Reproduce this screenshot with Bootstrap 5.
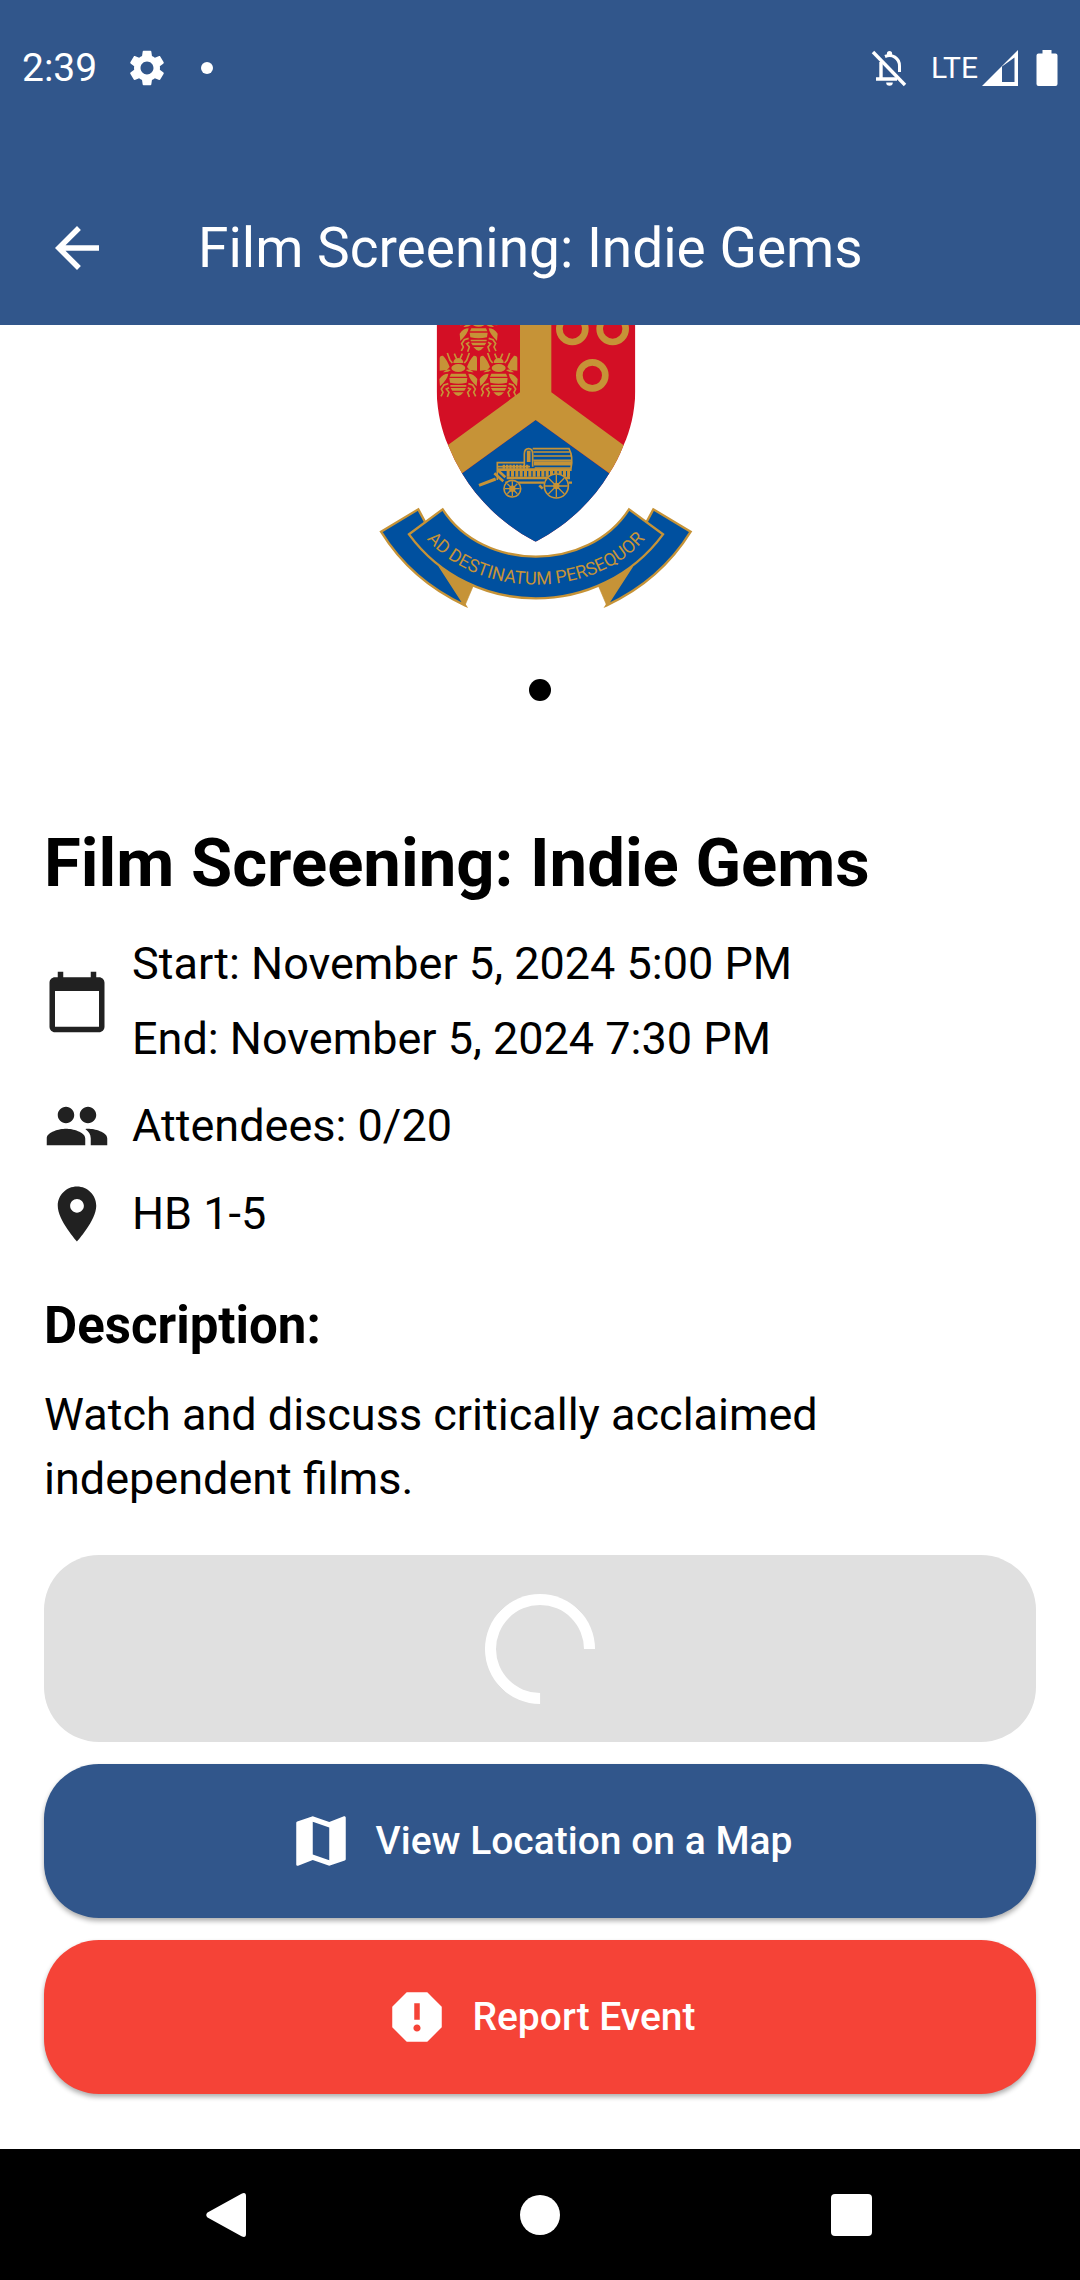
<!DOCTYPE html>
<html lang="en">
<head>
<meta charset="utf-8">
<meta name="viewport" content="width=device-width, initial-scale=1">
<title>Film Screening: Indie Gems</title>
<link href="https://cdn.jsdelivr.net/npm/bootstrap@5.3.0/dist/css/bootstrap.min.css" rel="stylesheet">
<style>
  :root { --navy: #31568b; --alert-red: #f54337; }
  body { font-family: Roboto, "Noto Sans", sans-serif; font-size: 45px; line-height: 64px; color: #000; background: #fff; }
  .bg-navy { background: var(--navy); }
  .status-bar { height: 171px; padding: 0 22px 36px; font-size: 39px; line-height: 44px; }
  .status-left { gap: 32px; }
  .lte-label { font-size: 30px; }
  .status-dot { width: 12px; height: 12px; margin-left: 4px; }
  .app-bar { height: 154px; padding: 0 44px; gap: 88px; }
  .app-title { font-size: 55px; line-height: 66px; font-weight: 400; }
  .icon-lg { width: 66px; height: 66px; flex: none; fill: currentColor; display: block; }
  .crest { width: 350px; height: 295px; display: block; }
  .page-dot { width: 22px; height: 22px; margin: 59px 0 115px; }
  .details { padding: 0 44px 55px; }
  .event-title { font-size: 67px; line-height: 94px; font-weight: 700; }
  .section-title { font-size: 51px; line-height: 70px; font-weight: 700; }
  .stack { gap: 22px; }
  .facts { margin: 22px 0 44px; gap: 22px; }
  .fact { gap: 22px; }
  .fact svg { color: #212121; }
  .dates { gap: 11px; }
  .about { margin: 22px 0 44px; }
  .action { border: 0; border-radius: 55px; height: 154px; gap: 22px; font-size: 39px; line-height: 55px; font-weight: 500; color: #fff; box-shadow: 0 3px 5px rgba(0,0,0,.32); }
  .action:hover { color: #fff; }
  .action-join, .action-join:disabled { height: 187px; background: #e0e0e0; box-shadow: none; opacity: 1; color: #fff; border: 0; }
  .action-map { background: var(--navy); }
  .action-report { background: var(--alert-red); }
  .action-join .spinner-border { width: 110px; height: 110px; border-width: 11px; animation: none; transform: rotate(45deg); }
  .system-nav { height: 132px; padding: 0 72px; }
  .system-nav button { background: none; border: 0; padding: 0; }
  .system-nav svg { width: 46px; height: 46px; fill: #fff; display: block; margin: 0 auto; }
</style>
</head>
<body class="d-flex flex-column min-vh-100">
<header class="bg-navy text-white">
  <div class="status-bar d-flex align-items-center justify-content-between">
    <div class="status-left d-flex align-items-center">
      <span>2:39</span>
      <svg width="36" height="36" viewBox="2 2 20 20" fill="#fff" aria-hidden="true"><path d="M19.14 12.94c.04-.3.06-.61.06-.94 0-.32-.02-.64-.07-.94l2.03-1.58c.18-.14.23-.41.12-.61l-1.92-3.32c-.12-.22-.37-.29-.59-.22l-2.39.96c-.5-.38-1.03-.7-1.62-.94l-.36-2.54c-.04-.24-.24-.41-.48-.41h-3.84c-.24 0-.43.17-.47.41l-.36 2.54c-.59.24-1.13.57-1.62.94l-2.39-.96c-.22-.08-.47 0-.59.22L2.74 8.87c-.12.21-.08.47.12.61l2.03 1.58c-.05.3-.09.63-.09.94s.02.64.07.94l-2.03 1.58c-.18.14-.23.41-.12.61l1.92 3.32c.12.22.37.29.59.22l2.39-.96c.5.38 1.03.7 1.62.94l.36 2.54c.05.24.24.41.48.41h3.84c.24 0 .44-.17.47-.41l.36-2.54c.59-.24 1.13-.56 1.62-.94l2.39.96c.22.08.47 0 .59-.22l1.92-3.32c.12-.22.07-.47-.12-.61l-2.01-1.58zM12 15.6c-1.98 0-3.6-1.62-3.6-3.6s1.62-3.6 3.6-3.6 3.6 1.62 3.6 3.6-1.62 3.6-3.6 3.6z"/></svg>
      <span class="status-dot rounded-circle bg-white"></span>
    </div>
    <div class="d-flex align-items-center">
      <svg class="me-4" width="36" height="38" viewBox="0 0 36 38" fill="none" stroke="#fff" aria-hidden="true"><path d="M2 3 L34 36" stroke-width="3.4"/><path d="M10 13 V29 M5 30 H26" stroke-width="3.4"/><path d="M14 7.500C21 4.500 28.500 9 28.500 17V23" stroke-width="3"/><circle cx="18.500" cy="4.500" r="2.600" fill="#fff" stroke="none"/><path d="M15.200 33.500h6.600a3.300 3.300 0 0 1-6.600 0z" fill="#fff" stroke="none"/></svg>
      <span class="lte-label me-1">LTE</span>
      <svg width="36" height="36" viewBox="0 0 36 36" fill="#fff" aria-hidden="true"><path fill-rule="evenodd" d="M0 36 36 0V36Z M20 16.500V32H32.500V7.500Z"/></svg>
      <svg class="ms-3" width="24" height="38" viewBox="0 0 24 38" fill="#fff" aria-hidden="true"><path d="M8.500 1h9v3.500h4q2 0 2 2V35q0 2-2 2h-17q-2 0-2-2V6.500q0-2 2-2h4z"/></svg>
    </div>
  </div>
  <div class="app-bar d-flex align-items-center">
    <a href="#" class="text-white" aria-label="Back"><svg class="icon-lg" viewBox="0 0 24 24"><path d="M20 11H7.830l5.590-5.590L12 4l-8 8 8 8 1.410-1.410L7.830 13H20v-2z"/></svg></a>
    <h1 class="app-title m-0">Film Screening: Indie Gems</h1>
  </div>
</header>

<main class="flex-grow-1">
  <div class="d-flex flex-column align-items-center">
    <svg class="crest" viewBox="15 15 1050 885" role="img" aria-label="Crest with the motto Ad Destinatum Persequor">
      <defs>
        <clipPath id="shield"><path d="M230 0V215C232 280 245 330 264 375Q283 422 306 460C360 550 440 620 527 665C614 620 694 550 748 460Q773 422 791 375C811 330 824 280 826 215V0Z"/></clipPath>
        <g id="bee" fill="#c69337" stroke="none">
          <path d="M-56-50Q-57-61-46-60Q-34-48-26-26L-34-17L-56-15Z"/><path d="M56-50Q57-61 46-60Q34-48 26-26L34-17L56-15Z"/>
          <path d="M-46-10Q-34-22-22-17Q-30-9-46-10ZM46-10Q34-22 22-17Q30-9 46-10Z"/>
          <path d="M-57 10Q-46-6-30-6Q-32 10-55 32ZM57 10Q46-6 30-6Q32 10 55 32Z"/>
          <path d="M-15-38Q-15-52 0-53Q15-52 15-38Z"/>
          <ellipse cx="0" cy="-23" rx="21" ry="12"/>
          <path d="M-22-6H22L26 3H-26ZM-27 7H27L25 21Q0 27-25 21ZM-24 28H24V33H-24ZM-23 37H23L18 45H-18ZM-16 50H16Q8 60 0 61Q-8 60-16 50Z"/>
          <path d="M-5-50-12-66M5-50 12-66M-18-38-25-46-33-68M18-38 25-46 33-68M-30 24-43 28-51 40-46 50-52 62M30 24 43 28 51 40 46 50 52 62M-28 36-36 40-28 50-33 64M28 36 36 40 28 50 33 64" fill="none" stroke="#c69337" stroke-width="5"/>
        </g>
        <path id="motto-line" d="M180 631C332 848 723 848 875 631"/>
      </defs>
      <g clip-path="url(#shield)">
        <rect x="220" y="0" width="620" height="680" fill="#d30f25"/>
        <path d="M200 537 527 300 854 537V680H200Z" fill="#00509f"/>
        <path d="M480 0V217L220 407V522L306 460 527 300 748 460 834 522V407L574 217V0Z" fill="#c69337"/>
      </g>
      <use href="#bee" x="295" y="167"/><use href="#bee" x="416" y="167"/><use href="#bee" x="356" y="31"/>
      <g fill="none" stroke="#c69337" stroke-width="20"><circle cx="637" cy="27" r="39"/><circle cx="758" cy="27" r="39"/><circle cx="697" cy="166" r="39"/></g>
      <g stroke="#c69337" fill="none" stroke-width="5">
        <path d="M357 496 407 477" stroke-width="9"/>
        <path d="M403 460 430 484M413 450 436 472" stroke-width="8"/>
        <path d="M412 480V428H495M414 440H510" />
        <path d="M428 440H508" stroke-width="12" stroke-dasharray="7 3"/>
        <path d="M493 440V402Q493 386 506 386Q518 386 518 402V440"/><path d="M506 392V426" stroke-width="11"/>
        <path d="M518 386H627Q640 410 633 444H524M520 396H633M520 408H635M520 421H635M522 434H635"/>
        <path d="M522 428H633" stroke-width="8"/>
        <path d="M412 449H635" stroke-width="8"/>
        <path d="M440 461H630" stroke-width="18" stroke-dasharray="9 4"/>
        <path d="M440 474H630M436 488H552M625 450V476M626 488H636" stroke-width="7"/>
        <path d="M538 496 548 506" stroke-width="8"/>
        <circle cx="457" cy="506" r="25" fill="#00509f"/><circle cx="457" cy="506" r="7"/>
        <circle cx="589" cy="498" r="36" fill="#00509f"/><circle cx="589" cy="498" r="7" fill="#c69337"/>
        <path d="M457 484V528M435 506H479M442 491 472 521M442 521 472 491M589 464V532M555 498H623M565 474 613 522M565 522 613 474" stroke-width="4"/>
      </g>
      <g stroke="#c69337" stroke-width="7">
        <path d="M63 635 175 568 200 615 240 740 315 856C205 805 125 735 63 635ZM992 635 880 568 855 615 815 740 740 856C850 805 930 735 992 635Z" fill="#00509f"/>
        <path d="M240 740 340 797 315 856ZM815 740 715 797 740 856Z" fill="#c69337" stroke-width="2"/>
        <path d="M248 568C370 757 685 757 807 568L909 643C720 899 335 899 147 643Z" fill="#00509f"/>
      </g>
      <text font-family="Roboto, sans-serif" font-size="54" fill="#c69337"><textPath href="#motto-line" startOffset="50%" text-anchor="middle">AD DESTINATUM PERSEQUOR</textPath></text>
    </svg>
    <span class="page-dot rounded-circle bg-black"></span>
  </div>

  <div class="details">
    <h2 class="event-title m-0">Film Screening: Indie Gems</h2>
    <div class="facts d-flex flex-column">
      <div class="fact d-flex align-items-center">
        <svg class="icon-lg" viewBox="0 0 24 24" aria-hidden="true"><path d="M20 3h-1V1h-2v2H7V1H5v2H4c-1.100 0-2 .9-2 2v16c0 1.100.9 2 2 2h16c1.100 0 2-.9 2-2V5c0-1.100-.9-2-2-2zm0 18H4V8h16v13z"/></svg>
        <div class="dates d-flex flex-column"><span>Start: November 5, 2024 5:00 PM</span><span>End: November 5, 2024 7:30 PM</span></div>
      </div>
      <div class="fact d-flex align-items-center">
        <svg class="icon-lg" viewBox="0 0 24 24" aria-hidden="true"><path d="M16 11c1.660 0 2.990-1.340 2.990-3S17.660 5 16 5s-3 1.340-3 3 1.340 3 3 3zM8 11c1.660 0 2.990-1.340 2.990-3S9.660 5 8 5 5 6.340 5 8s1.340 3 3 3zM8 13c-2.330 0-7 1.170-7 3.500V19h14v-2.500c0-2.330-4.670-3.500-7-3.500zm8 0c-.29 0-.62.020-.97.050 1.160.84 1.970 1.970 1.970 3.450V19h6v-2.500c0-2.330-4.670-3.500-7-3.500z"/></svg>
        <span>Attendees: 0/20</span>
      </div>
      <div class="fact d-flex align-items-center">
        <svg class="icon-lg" viewBox="0 0 24 24" aria-hidden="true"><path d="M12 2C8.130 2 5 5.130 5 9c0 5.250 7 13 7 13s7-7.750 7-13c0-3.870-3.130-7-7-7zm0 9.500c-1.380 0-2.500-1.120-2.500-2.500s1.120-2.500 2.500-2.500 2.500 1.120 2.500 2.500-1.120 2.500-2.500 2.500z"/></svg>
        <span>HB 1-5</span>
      </div>
    </div>
    <h3 class="section-title m-0">Description:</h3>
    <p class="about">Watch and discuss critically acclaimed independent films.</p>
    <div class="stack d-flex flex-column">
      <button type="button" class="btn action action-join d-flex align-items-center justify-content-center" disabled aria-label="Loading"><span class="spinner-border"></span></button>
      <button type="button" class="btn action action-map d-flex align-items-center justify-content-center"><svg class="icon-lg" viewBox="0 0 24 24" aria-hidden="true"><path d="M20.500 3l-.16.030L15 5.100 9 3 3.360 4.900c-.21.070-.36.250-.36.480V20.500c0 .28.220.5.500.5l.16-.030L9 18.900l6 2.100 5.640-1.900c.21-.070.36-.25.36-.48V3.500c0-.28-.22-.5-.5-.5zM15 19l-6-2.110V5l6 2.110V19z"/></svg>View Location on a Map</button>
      <button type="button" class="btn action action-report d-flex align-items-center justify-content-center"><svg class="icon-lg" viewBox="0 0 24 24" aria-hidden="true"><path d="M15.730 3H8.270L3 8.270v7.460L8.270 21h7.460L21 15.730V8.270L15.730 3zM12 17.300c-.72 0-1.300-.58-1.300-1.300s.58-1.300 1.300-1.300 1.300.58 1.300 1.300-.58 1.300-1.300 1.300zm1-4.300h-2V7h2v6z"/></svg>Report Event</button>
    </div>
  </div>
</main>

<nav class="system-nav bg-black d-flex align-items-center" aria-label="System">
  <button type="button" class="flex-fill" aria-label="Back"><svg viewBox="0 0 46 46"><path d="M2.500 20.500 37 1.500Q41 0 41 4V42Q41 46 37 44.500L2.500 25.500Q0 23 2.500 20.500Z"/></svg></button>
  <button type="button" class="flex-fill" aria-label="Home"><svg viewBox="0 0 46 46"><circle cx="23" cy="23" r="20"/></svg></button>
  <button type="button" class="flex-fill" aria-label="Recent apps"><svg viewBox="0 0 46 46"><rect x="2" y="2" width="41" height="42" rx="4"/></svg></button>
</nav>
<script src="https://cdn.jsdelivr.net/npm/bootstrap@5.3.0/dist/js/bootstrap.bundle.min.js"></script>
</body>
</html>
